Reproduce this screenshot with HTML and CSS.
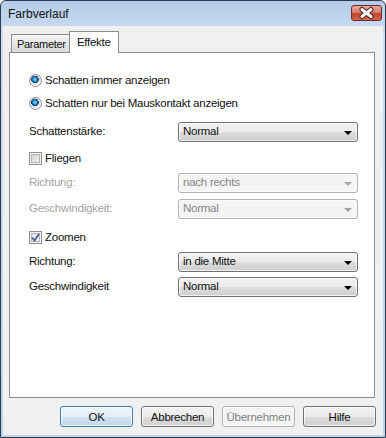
FILE: index.html
```html
<!DOCTYPE html>
<html lang="de">
<head>
  <meta charset="UTF-8" />
  <title>Farbverlauf</title>
  <link rel="stylesheet" href="styles.css">
</head>
<body>

  <div class="window">
    <div class="titlebar">
      <span class="title">Farbverlauf</span>
      <button class="close" aria-label="Schließen">
        <svg width="29" height="14" viewBox="0 0 29 14">
          <path d="M10 3.5 L19 10.5 M19 3.5 L10 10.5" stroke="#4b2320" stroke-width="5" stroke-linecap="round"/>
          <path d="M10 3.5 L19 10.5 M19 3.5 L10 10.5" stroke="#fff" stroke-width="3" stroke-linecap="round"/>
        </svg>
      </button>
    </div>

    <div class="client">
      <div class="tabs">
        <div class="tab">Parameter</div>
        <div class="tab active">Effekte</div>
      </div>

      <div class="panel">
        <div class="options">
          <label class="opt"><span class="radio on"></span>Schatten immer anzeigen</label>
          <label class="opt"><span class="radio on"></span>Schatten nur bei Mauskontakt anzeigen</label>
        </div>

        <div class="field gap-a">
          <span class="label">Schattenstärke:</span>
          <div class="select">Normal<span class="arrow"></span></div>
        </div>

        <label class="opt gap-b"><span class="check"></span>Fliegen</label>
        <div class="field gap-c disabled">
          <span class="label">Richtung:</span>
          <div class="select">nach rechts<span class="arrow"></span></div>
        </div>
        <div class="field gap-d disabled">
          <span class="label">Geschwindigkeit:</span>
          <div class="select">Normal<span class="arrow"></span></div>
        </div>

        <label class="opt gap-e"><span class="check on">
          <svg width="9" height="9" viewBox="0 0 9 9"><path d="M1 4.5 L3.5 7.5 L8 1" fill="none" stroke="#4a5c8c" stroke-width="1.8"/></svg>
        </span>Zoomen</label>
        <div class="field gap-c">
          <span class="label">Richtung:</span>
          <div class="select">in die Mitte<span class="arrow"></span></div>
        </div>
        <div class="field gap-f">
          <span class="label">Geschwindigkeit</span>
          <div class="select">Normal<span class="arrow"></span></div>
        </div>
      </div>

      <div class="actions">
        <button class="btn default">OK</button>
        <button class="btn">Abbrechen</button>
        <button class="btn" disabled>Übernehmen</button>
        <button class="btn">Hilfe</button>
      </div>
    </div>
  </div>

</body>
</html>
```

FILE: styles.css
```css
body {
  margin: 0;
  font-family: "Liberation Sans", Arial, sans-serif;
  font-size: 11px;
  letter-spacing: -0.25px;
  color: #111;
}
.window {
  width: 386px;
  height: 438px;
  box-sizing: border-box;
  border: 1px solid #2c3a4c;
  border-radius: 6px 6px 0 0;
  background: linear-gradient(#b4cbe8, #c9dcf2 30px, #bcd6ee);
  display: flex;
  flex-direction: column;
}
.titlebar {
  height: 25px;
  display: flex;
  justify-content: space-between;
  align-items: flex-start;
  padding: 0 3px 0 7px;
}
.title {
  font-size: 12px;
  letter-spacing: 0;
  line-height: 12px;
  margin-top: 7px;
}
.close {
  width: 31px;
  height: 16px;
  margin-top: 4px;
  padding: 0;
  border: 1px solid #6a2a26;
  border-radius: 3px;
  background: linear-gradient(#e9a99b, #d5806d 45%, #c2472f 55%, #d2654c);
  display: flex;
  align-items: center;
  justify-content: center;
}
.client {
  flex: 1;
  margin: 0 2px 2px;
  background: #f0f0f0;
  padding: 5px 0 0 6px;
}
.tabs {
  display: flex;
  align-items: flex-end;
  height: 21px;
  padding-left: 2px;
}
.tab {
  height: 18px;
  width: 59px;
  box-sizing: border-box;
  border: 1px solid #898c95;
  border-bottom: none;
  background: linear-gradient(#f6f6f6, #e6e6e6 50%, #dadada);
  padding: 3px 0 0 5px;
  font-size: 11px;
  letter-spacing: -0.3px;
}
.tab.active {
  width: 50px;
  height: 22px;
  margin-left: -1px;
  margin-bottom: -1px;
  background: #fff;
  padding: 4px 0 0 7px;
  font-size: 11.5px;
  position: relative;
}
.panel {
  width: 366px;
  height: 346px;
  box-sizing: border-box;
  border: 1px solid #898c95;
  background: #fff;
  padding: 19px 0 0 19px;
  display: flex;
  flex-direction: column;
}
.options {
  display: flex;
  flex-direction: column;
  gap: 7px;
}
.opt {
  height: 16px;
  display: flex;
  align-items: center;
  gap: 3px;
  font-size: 11.5px;
}
.radio {
  width: 13px;
  height: 13px;
  box-sizing: border-box;
  border-radius: 50%;
  border: 1px solid #8e9096;
  background: radial-gradient(circle, #2d8bd0 0, #1565a8 2.5px, #0b3e6e 3.5px, #e8e8e8 4px, #fff 6px);
}
.radio.on {
  background: radial-gradient(circle at 45% 40%, #aee6ff 0, #3a9de0 1.5px, #17609c 3px, #0a3762 3.6px, #dcdcdc 4px, #f7f7f7 6px);
}
.check {
  width: 13px;
  height: 13px;
  box-sizing: border-box;
  border: 1px solid #8e8f8f;
  background: #f4f4f4;
  box-shadow: inset 0 0 0 1px #f4f4f4, inset 0 0 0 2px #b4b4b4;
  background-image: linear-gradient(135deg, #cfcfcf, #f4f4f4);
  display: flex;
  align-items: center;
  justify-content: center;
}
.check.on {
  background-image: linear-gradient(135deg, #d4dbe8, #f4f6fa);
}
.field {
  display: flex;
  align-items: center;
  font-size: 11.5px;
}
.field .label {
  width: 149px;
  margin-top: -2px;
}
.select {
  width: 180px;
  height: 20px;
  box-sizing: border-box;
  border: 1px solid #707070;
  border-radius: 3px;
  background: linear-gradient(#f2f2f2, #ebebeb 50%, #dddddd 50%, #cfcfcf);
  box-shadow: inset 0 0 0 1px rgba(255,255,255,0.7);
  padding: 2px 0 0 4px;
  display: flex;
  justify-content: space-between;
}
.arrow {
  width: 0;
  height: 0;
  border-left: 4px solid transparent;
  border-right: 4px solid transparent;
  border-top: 4px solid #000;
  margin: 6px 5px 0 0;
}
.disabled .label { color: #a3a3a3; }
.disabled .select {
  border-color: #adb2b5;
  background: #f4f4f4;
  color: #848484;
}
.disabled .arrow { border-top-color: #a5a5a5; }
.gap-a { margin-top: 11px; }
.gap-b { margin-top: 8px; }
.gap-c { margin-top: 7px; }
.gap-d { margin-top: 6px; }
.gap-e { margin-top: 10px; }
.gap-f { margin-top: 5px; }
.actions {
  display: flex;
  justify-content: flex-end;
  gap: 8px;
  padding: 8px 7px 0 0;
}
.btn {
  width: 73px;
  height: 21px;
  border: 1px solid #707070;
  border-radius: 3px;
  background: linear-gradient(#f2f2f2, #ebebeb 50%, #dddddd 50%, #cfcfcf);
  box-shadow: inset 0 0 0 1px rgba(255,255,255,0.7);
  font: inherit;
  font-size: 11.5px;
  letter-spacing: -0.25px;
  color: #111;
  padding: 0;
}
.btn.default {
  border-color: #3c7fb1;
  background: linear-gradient(#eef6fb, #e2eef6 50%, #cfe2ef 50%, #c3d8e8);
}
.btn:disabled {
  border-color: #adb2b5;
  background: #f4f4f4;
  color: #838383;
}
```
